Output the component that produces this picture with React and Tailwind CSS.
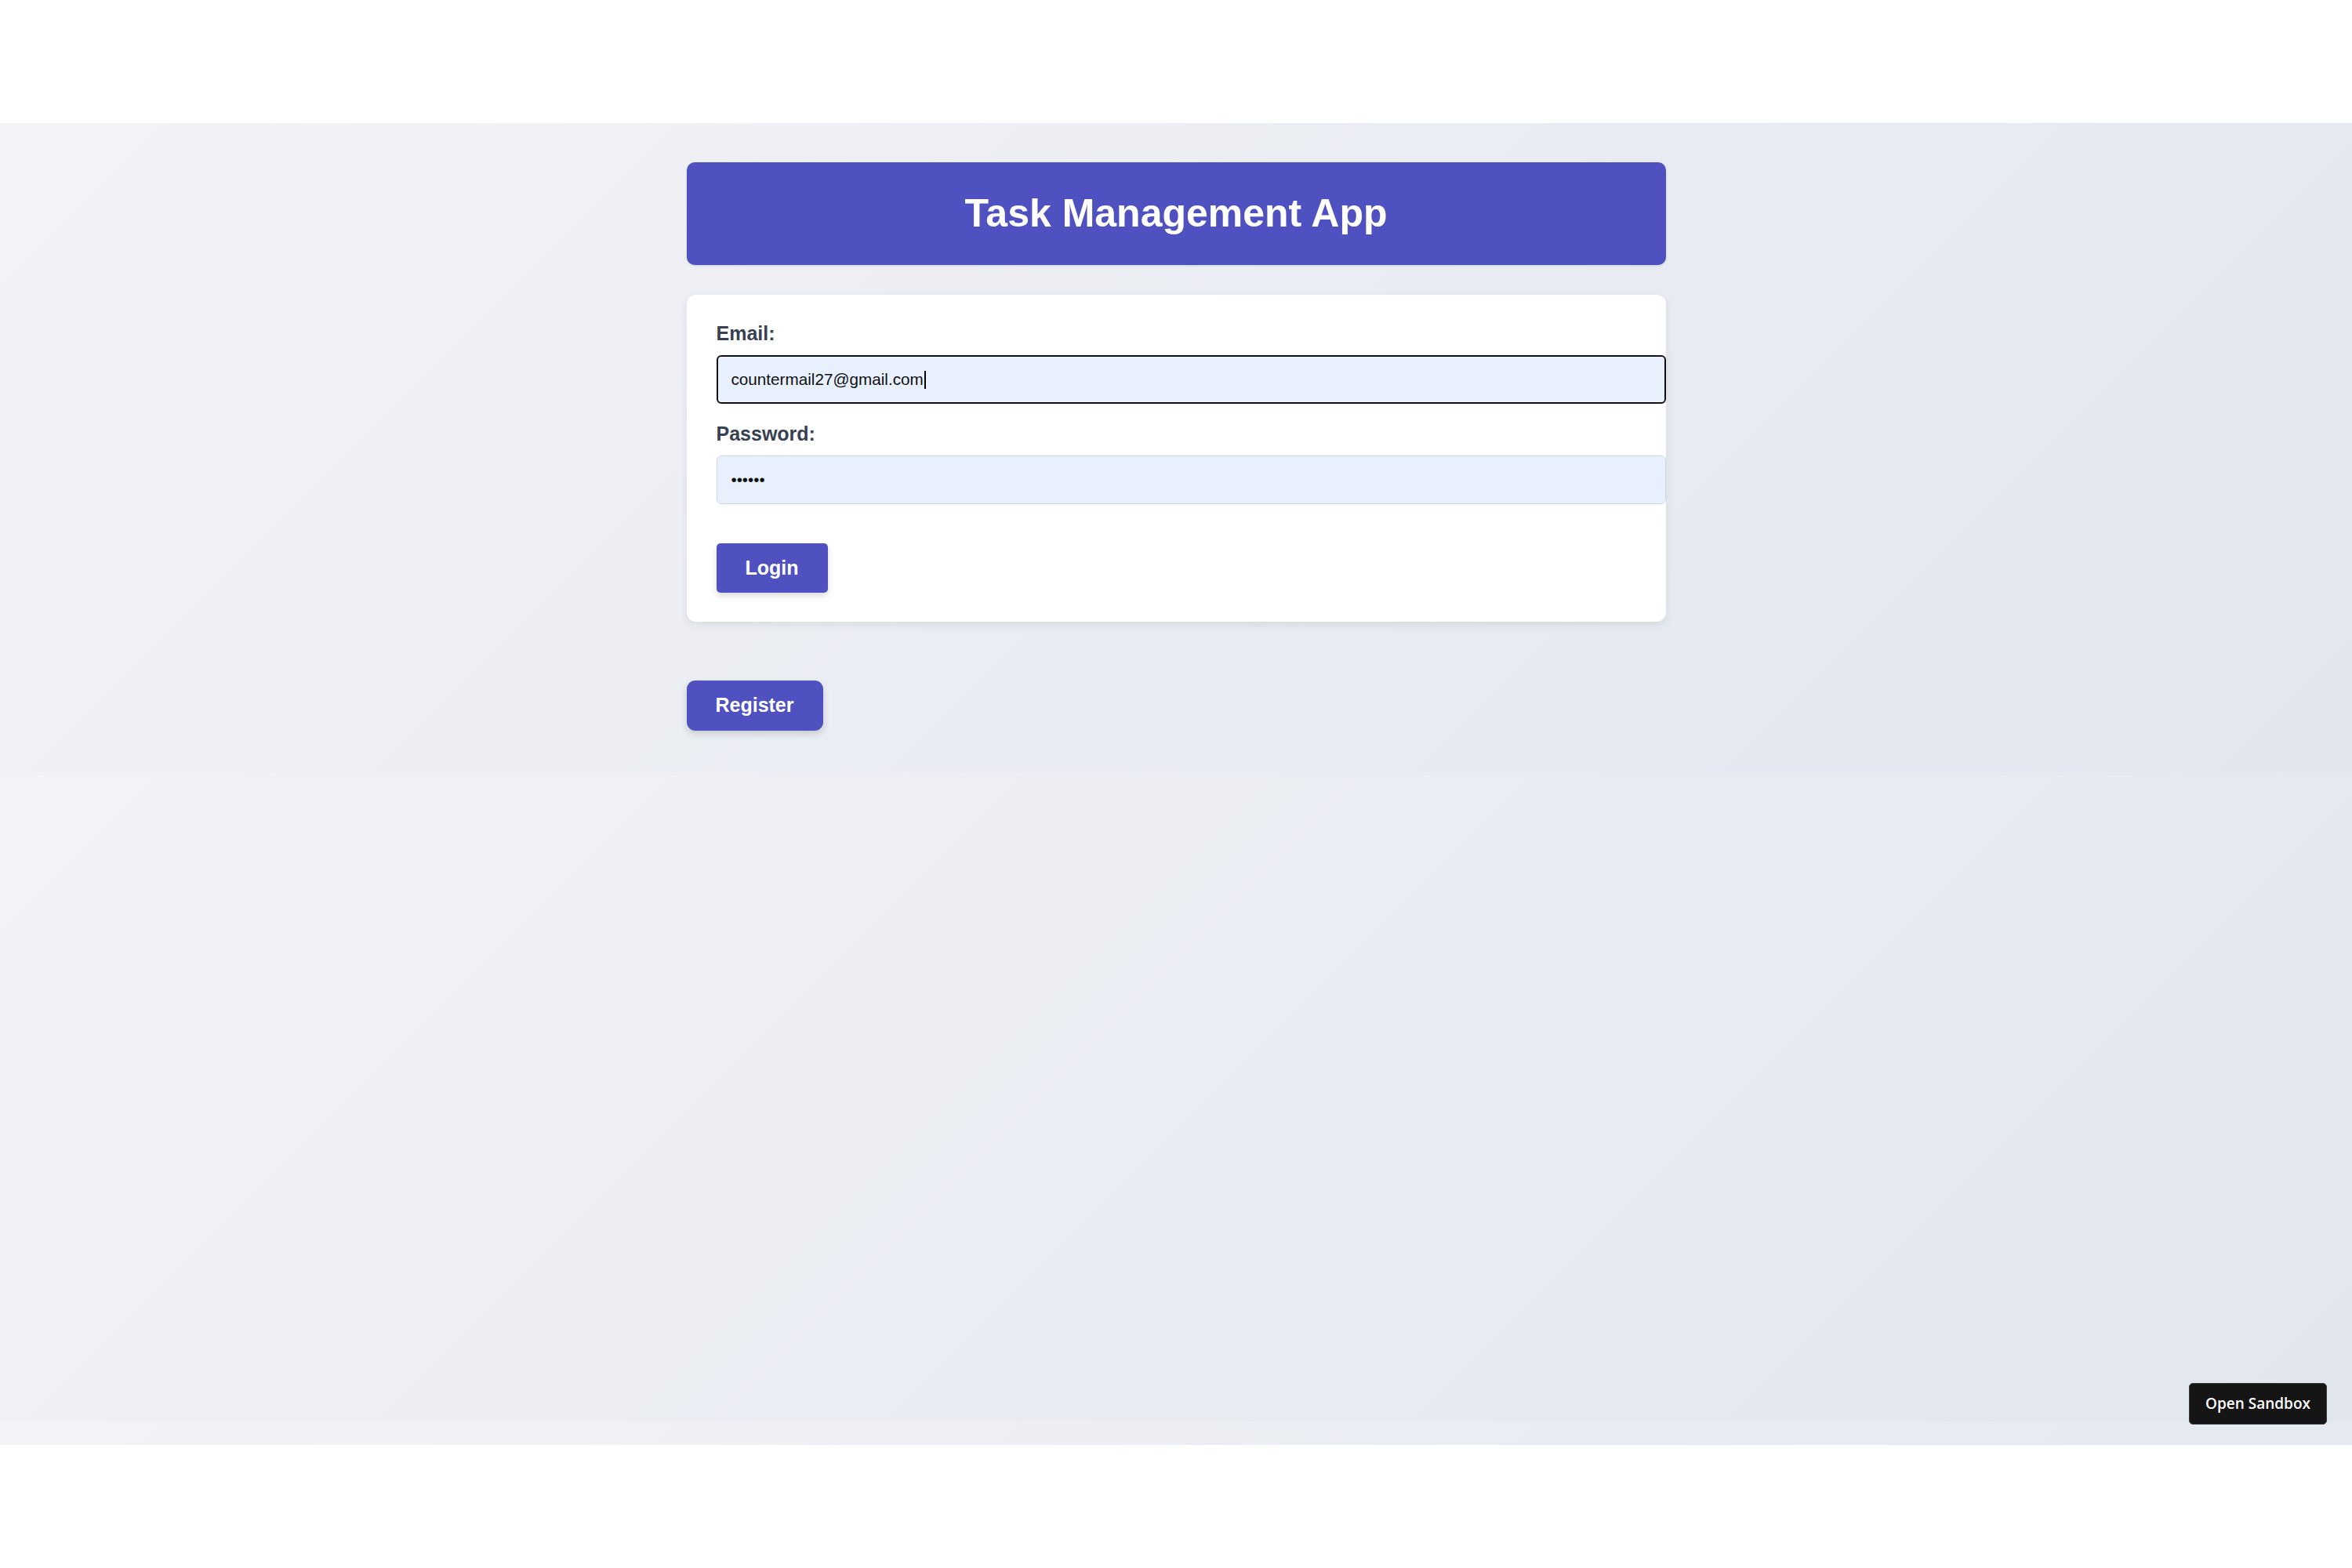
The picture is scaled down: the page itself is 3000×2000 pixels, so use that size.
import React from "react";

const App = () => {
  return (
    <div className="w-[3000px] h-[2000px] bg-white pt-[157px] font-['Liberation_Sans',Arial,sans-serif]">
      {/* sandbox frame */}
      <div className="relative h-[1686px] bg-[linear-gradient(135deg,#f2f3f6_0%,#e1e6ef_100%)] bg-[length:100%_828px] bg-repeat-y">
        <div className="w-[1249px] mx-auto pt-[50px]">
          {/* header */}
          <header className="h-[131px] rounded-[10px] bg-[#4e51bf] flex items-center justify-center shadow-sm">
            <h1 className="text-white text-[50px] font-bold leading-none pb-[2px]">Task Management App</h1>
          </header>

          {/* login form */}
          <form className="mt-[38px] bg-white rounded-[12px] shadow-[0_4px_12px_rgba(0,0,0,0.08)] pl-[38px] pr-0 pt-[35px] pb-[37px]">
            <label className="block text-[25px] leading-[29px] font-bold text-[#374151]">Email:</label>
            <div className="mt-[13px] h-[62px] w-full rounded-[6px] border-2 border-[#111] bg-[#e8f0fe] pl-[17px] flex items-center text-[20.7px] text-[#111]">
              <span>countermail27@gmail.com</span>
              <span className="inline-block w-[2px] h-[23px] bg-black ml-px"></span>
            </div>

            <label className="block mt-[24px] text-[25px] leading-[29px] font-bold text-[#374151]">Password:</label>
            <input
              type="password"
              readOnly
              value="123456"
              className="mt-[13px] h-[62px] w-full rounded-[6px] border border-[#cdd6e4] bg-[#e8f0fe] pl-[18px] text-[20.5px] text-[#111] outline-none font-['Liberation_Sans',Arial,sans-serif]"
            />

            <button
              type="button"
              className="mt-[50px] w-[142px] h-[63px] rounded-[5px] bg-[#4e51bf] text-white text-[25px] font-bold flex items-center justify-center shadow-[0_4px_8px_rgba(0,0,0,0.15)]"
            >
              Login
            </button>
          </form>

          <button
            type="button"
            className="mt-[75px] w-[174px] h-[64px] rounded-[11px] bg-[#4e51bf] text-white text-[25px] font-bold flex items-center justify-center shadow-[0_4px_8px_rgba(0,0,0,0.15)]"
          >
            Register
          </button>
        </div>

        {/* sandbox badge */}
        <div className="absolute right-[32px] bottom-[26px] w-[176px] h-[53px] rounded-[5px] bg-[#151515] border border-[#3a3a3a] flex items-center justify-center text-white text-[19px] font-semibold font-['Open_Sans',sans-serif]">
          Open Sandbox
        </div>
      </div>
    </div>
  );
};

export default App;
